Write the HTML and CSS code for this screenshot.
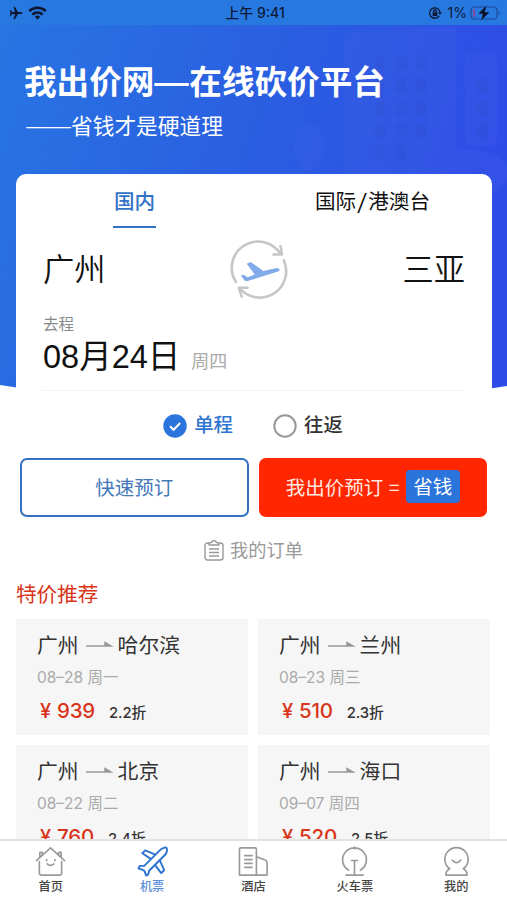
FILE: index.html
```html
<!DOCTYPE html>
<html lang="zh-CN">
<head>
<meta charset="utf-8">
<title>我出价网</title>
<link rel="stylesheet" href="styles.css">
</head>
<body>
<div class="app">
  <header class="status">
    <div class="status-left">
      <svg width="14" height="14" viewBox="0 0 14 14"><path d="M13.300 7c0-.7-.8-1.100-1.800-1.100H9L5.800.8H4.500L6 5.900H3.200L1.900 4.300H.8L1.500 7 .8 9.700h1.100l1.300-1.600H6L4.500 13.200h1.300L9 8.100h2.500c1 0 1.800-.4 1.800-1.100z" fill="#0d1830"/></svg>
      <svg width="19" height="14" viewBox="0 0 19 14" fill="none" stroke="#0d1830" stroke-width="2.500"><path d="M1.200 5.200a12 12 0 0 1 16.600 0M4.400 8.500a7.400 7.400 0 0 1 10.200 0"/><path d="M9.500 13.400 6.800 10.700a4 4 0 0 1 5.400 0z" fill="#0d1830" stroke="none"/></svg>
    </div>
    <div class="status-time">上午 9:41</div>
    <div class="status-right">
      <svg width="14" height="14" viewBox="0 0 14 14" fill="none" stroke="#0d1830" stroke-width="1.300"><path d="M11.200 9.800A5.200 5.200 0 1 1 12 7"/><path d="M10.200 6.300h3.600L12 8.700z" fill="#0d1830" stroke="none"/><rect x="4.600" y="6.300" width="4.800" height="3.600" rx=".6" fill="#0d1830" stroke="none"/><path d="M5.600 6.500V5.400a1.400 1.400 0 0 1 2.800 0v1.100"/></svg>
      <span>1%</span>
      <svg class="battery" width="31" height="16" viewBox="0 0 31 16"><rect x="1" y="2" width="26" height="12" rx="3.500" fill="none" stroke="#1d4b9b" stroke-width="1.200"/><rect x="3" y="4" width="2" height="8" rx="1" fill="#8a4a9a"/><path d="M28.700 6v4c1.300-.5 1.300-3.500 0-4z" fill="#1d4b9b"/><path d="M16.300.8 8.300 8.700h4.600l-1.600 6.500 8-8h-4.600z" fill="#0b1226"/></svg>
    </div>
  </header>

  <section class="hero">
    <svg class="hero-bg" viewBox="0 0 507 364" preserveAspectRatio="none">
      <defs>
        <linearGradient id="sky" x1="0" y1="0" x2="1" y2=".25"><stop offset="0" stop-color="#2875e3"/><stop offset=".5" stop-color="#2a60e1"/><stop offset="1" stop-color="#2e4ce6"/></linearGradient>
      </defs>
      <path d="M0 0H507V361Q253 400 0 360Z" fill="url(#sky)"/>
      <g fill="#4a68e6" opacity=".18">
        <path d="M344 8 456 2V150H344z"/><rect x="465" y="28" width="32" height="93" rx="6"/><ellipse cx="309" cy="122" rx="15" ry="24"/><ellipse cx="466" cy="148" rx="44" ry="24"/>
      </g>
      <g fill="#2a4cc6" opacity=".22">
        <rect x="375" y="32" width="10" height="13" rx="4"/><rect x="396" y="32" width="11" height="13" rx="4"/><rect x="416" y="32" width="11" height="13" rx="4"/>
        <rect x="375" y="53" width="10" height="15" rx="3"/><rect x="396" y="53" width="11" height="15" rx="3"/><rect x="416" y="53" width="11" height="15" rx="3"/>
        <rect x="375" y="76" width="10" height="15" rx="3"/><rect x="396" y="76" width="11" height="15" rx="3"/><rect x="416" y="76" width="11" height="15" rx="3"/>
        <rect x="375" y="98" width="10" height="15" rx="4"/><rect x="396" y="98" width="11" height="15" rx="4"/><rect x="416" y="98" width="11" height="15" rx="4"/>
        <rect x="375" y="120" width="10" height="15" rx="4"/><rect x="396" y="120" width="11" height="15" rx="4"/>
        <rect x="477" y="53" width="10" height="15" rx="3"/><rect x="477" y="76" width="10" height="15" rx="3"/><rect x="477" y="98" width="10" height="15" rx="3"/>
      </g>
    </svg>
    <h1 class="hero-title">我出价网<span class="title-dash">—</span>在线砍价平台</h1>
    <p class="hero-sub"><span class="dash">——</span>省钱才是硬道理</p>
    <div class="search-card">
      <div class="tabs">
        <div class="tab active">国内</div>
        <div class="tab">国际<span class="slash">/</span>港澳台</div>
      </div>
      <div class="cities">
        <span>广州</span>
        <svg width="56" height="57" viewBox="0 0 56 57" fill="none" stroke="#c6c6c6" stroke-width="2.600" stroke-linecap="round" stroke-linejoin="round"><path d="M3.800 38.800A26.300 26.300 0 0 1 48.500 10.900M41.500 11.500 50 11.500 48.500 3"/><path d="M51.800 17.400A26.300 26.300 0 0 1 7.300 44.700M15.500 44.700 6.800 44.700 9.700 53.500"/><path d="M8.700 32.300 12 32 15.500 34.300 22.700 31.500 14.700 20.700 18.700 19 31.300 28 43.500 25.300C47.500 24.400 49.500 27.200 45.300 28.700L16.500 37.800C14 38.600 13 37.800 12.200 37Z" fill="#82aae9" stroke="none"/></svg>
        <span>三亚</span>
      </div>
      <div class="label">去程</div>
      <div class="date"><span class="date-day">08月24日</span><span class="date-week">周四</span></div>
    </div>
  </section>

  <main class="body">
    <div class="trip">
      <div class="radio active"><svg width="24" height="24" viewBox="0 0 24 24"><circle cx="12" cy="12" r="11.700" fill="#2a74dc"/><path d="m7 12.300 3.600 3.500 6.600-6.800" fill="none" stroke="#fff" stroke-width="2"/></svg><span>单程</span></div>
      <div class="radio"><svg width="24" height="24" viewBox="0 0 24 24"><circle cx="12" cy="12" r="10.700" fill="none" stroke="#999" stroke-width="2"/></svg><span>往返</span></div>
    </div>
    <div class="actions">
      <div class="btn outline">快速预订</div>
      <div class="btn solid"><span>我出价预订 <span class="equals">=</span></span><b class="save">省钱</b></div>
    </div>
    <div class="orders">
      <svg width="20" height="21" viewBox="0 0 20 21" fill="none" stroke="#999" stroke-width="1.400" stroke-linejoin="round"><path d="M5 3H3.500A2.500 2.500 0 0 0 1 5.500v12A2.500 2.500 0 0 0 3.500 20h13a2.500 2.500 0 0 0 2.500-2.500v-12A2.500 2.500 0 0 0 16.500 3H15M5 5V3l2.500-.5Q8 .8 10 .8t2.500 1.700L15 3v2zM5 9h10M5 12.500h10M5 16h10"/></svg>
      <span>我的订单</span>
    </div>
    <h2 class="section-title">特价推荐</h2>
    <div class="deals">
      <article class="deal"><div class="route">广州<svg width="27" height="8" viewBox="0 0 27 8"><path d="M1 6H26L20 2.500V6" fill="#999" stroke="#999" stroke-width="1.500"/></svg>哈尔滨</div><div class="when">08–28 周一</div><div class="price"><i>¥</i><b>939</b><em>2.2折</em></div></article>
      <article class="deal"><div class="route">广州<svg width="27" height="8" viewBox="0 0 27 8"><path d="M1 6H26L20 2.500V6" fill="#999" stroke="#999" stroke-width="1.500"/></svg>兰州</div><div class="when">08–23 周三</div><div class="price"><i>¥</i><b>510</b><em>2.3折</em></div></article>
      <article class="deal"><div class="route">广州<svg width="27" height="8" viewBox="0 0 27 8"><path d="M1 6H26L20 2.500V6" fill="#999" stroke="#999" stroke-width="1.500"/></svg>北京</div><div class="when">08–22 周二</div><div class="price"><i>¥</i><b>760</b><em>2.4折</em></div></article>
      <article class="deal"><div class="route">广州<svg width="27" height="8" viewBox="0 0 27 8"><path d="M1 6H26L20 2.500V6" fill="#999" stroke="#999" stroke-width="1.500"/></svg>海口</div><div class="when">09–07 周四</div><div class="price"><i>¥</i><b>520</b><em>2.5折</em></div></article>
    </div>
  </main>

  <nav class="tabbar">
    <div class="item"><svg viewBox="0 0 32 32"><path d="M1.500 15 16 2 30.500 15M5 11.500V6.500H7.500V9M27 11.500V6.500H24.500V9M4.500 16V27.500a2.500 2.500 0 0 0 2.500 2.500H25a2.500 2.500 0 0 0 2.500-2.500V16M12 14v1.200M20.500 14v1.200M12.500 18.500q3.500 3 7 0"/></svg><span>首页</span></div>
    <div class="item active"><svg viewBox="0 0 32 32"><path d="M24 4C26 2 29.500 1 30.500 2S31 7 29 9L12.500 25.500 11.500 29.500 9.500 30.500 7.500 25.500 1.500 23 3 20.500 7.500 20.500ZM19 9 8.500 4.500 5.500 7.500 14.500 13.500M23.500 14.500 28 25 25 28 18.500 19.500"/></svg><span>机票</span></div>
    <div class="item"><svg viewBox="0 0 32 32"><path d="M3 2H17.500a1.500 1.500 0 0 1 1.500 1.500V30H1.500V3.500A1.500 1.500 0 0 1 3 2ZM19 11 28 14.500a3 3 0 0 1 2 2.500V30H19M7 10H14.500M7 14H14.500M7 18H14.500M7 22H14.500"/></svg><span>酒店</span></div>
    <div class="item"><svg viewBox="0 0 32 32"><path d="M10 25A12.300 12.300 0 1 1 22 25M16 1V3M16 15V30M13 15H19M7 30H25"/></svg><span>火车票</span></div>
    <div class="item"><svg viewBox="0 0 32 32"><path d="M9 23.500A12 12 0 1 1 23 23.500Q27 25.500 27 30H5Q5 25.500 9 23.500M11.500 14.500Q16 20 20.500 14.500"/></svg><span>我的</span></div>
  </nav>
</div>
</body>
</html>
```
FILE: styles.css
```css
* { box-sizing: border-box; margin: 0; padding: 0; }
body { background: #fff; font-family: Inter, "Noto Sans CJK SC", sans-serif; color: #111; }
svg { display: block; flex: none; overflow: visible; }
i, em { font-style: normal; }
.app { width: 507px; height: 900px; display: flex; flex-direction: column; overflow: hidden; }

.status { height: 25px; flex: none; background: #2779e0; display: grid; grid-template-columns: 1fr auto 1fr; align-items: center; padding: 1px 6px 0 9px; color: #0d1a35; font-size: 14px; line-height: 20px; }
.status-left { display: flex; align-items: center; gap: 5px; }
.status-time { font-weight: 500; }
.status-right { display: flex; align-items: center; justify-content: flex-end; gap: 6px; }
.battery { margin-left: -3px; }

.hero { position: relative; height: 364px; flex: none; padding: 0 15px 0 16px; }
.hero-bg { position: absolute; inset: 0; width: 507px; height: 364px; z-index: -1; overflow: hidden; }
.hero-title { display: flex; padding: 31px 0 0 8px; font: 700 32.600px/48px "Noto Sans CJK SC", sans-serif; color: #fff; white-space: nowrap; }
.title-dash { width: 35px; display: flex; justify-content: center; transform: scaleX(1.3); }
.hero-sub { display: flex; align-items: center; padding: 5px 0 0 9px; font: 400 21.700px/32px "Noto Sans CJK SC", sans-serif; color: #fff; }
.dash { width: 46px; white-space: nowrap; transform: scaleX(1.3); transform-origin: left; }
.search-card { margin-top: 33px; height: 216px; background: #fff; border-radius: 10px 10px 0 0; padding: 0 27px; }
.tabs { display: flex; justify-content: space-between; padding: 10px 35px 0 70px; }
.tab { font: 400 20.600px/33px "Noto Sans CJK SC", sans-serif; padding-bottom: 9px; }
.slash { display: inline-block; width: 12px; text-align: center; transform: scaleX(1.25); }
.tab.active { color: #3472c8; font-weight: 500; border-bottom: 2px solid #3472c8; padding-inline: 1px; }
.cities { display: flex; align-items: center; justify-content: space-between; height: 62px; margin-top: 12px; font: 350 31.300px/46px "Noto Sans CJK SC", sans-serif; }
.cities svg { margin-left: 11px; }
.cities span { position: relative; top: -3px; }
.label { margin-top: 10px; font: 400 15.500px/22px "Noto Sans CJK SC", sans-serif; color: #888; }
.date { display: flex; align-items: baseline; gap: 11px; line-height: 42px; margin-top: 2px; }
.date-day { font: 400 32.500px/42px "Liberation Sans", "Noto Sans CJK SC", sans-serif; }
.date-week { font: 400 18px/42px "Noto Sans CJK SC", sans-serif; color: #aaa; }

.body { flex: 1; min-height: 0; overflow: hidden; padding: 0 16px; }
.trip { display: flex; justify-content: center; gap: 40px; margin: 0 27px 0 26px; border-top: 2px solid #f3f3f3; padding-top: 19px; height: 69px; }
.radio { display: flex; gap: 7px; height: 32px; align-items: center; font: 500 19.400px/32px "Noto Sans CJK SC", sans-serif; color: #333; }
.radio.active { color: #2f74d0; }
.radio span { position: relative; top: -2px; }
.actions { display: grid; grid-template-columns: 1fr 1fr; gap: 10px; margin: 0 4px; }
.btn { height: 59px; border-radius: 7px; display: flex; align-items: center; justify-content: center; font: 400 19.500px/30px "Noto Sans CJK SC", sans-serif; padding-bottom: 2px; }
.outline { border: 2px solid #3472c0; color: #4478bb; }
.solid { background: #ff2600; color: #ffe9e0; gap: 5px; }
.equals { display: inline-block; width: 13px; text-align: center; }
.save { font-weight: 400; color: #fff; background: #2a74dc; border-radius: 4px; width: 54px; height: 33px; line-height: 32px; text-align: center; }
.orders { display: flex; align-items: center; justify-content: center; gap: 6px; margin-top: 17px; font: 400 18.200px/32px "Noto Sans CJK SC", sans-serif; color: #999; }
.orders span { position: relative; top: -1px; }
.section-title { margin-top: 11px; font: 400 20.600px/32px "Noto Sans CJK SC", sans-serif; color: #d8351a; }
.deals { display: grid; grid-template-columns: 232px 232px; gap: 10px; margin-top: 10px; }
.deal { height: 116px; background: #f6f6f6; padding: 9px 21px 0; }
.route { display: flex; align-items: center; gap: 6px; font: 400 20.800px/32px "Noto Sans CJK SC", sans-serif; color: #333; }
.when { padding-top: 2px; font: 400 15.500px/32px Inter, "Noto Sans CJK SC", sans-serif; color: #aaa; }
.price { display: flex; align-items: baseline; padding-left: 3px; line-height: 34px; color: #d8351a; }
.price i { font-size: 20px; font-weight: 500; width: 17px; }
.price b { font-size: 20.500px; font-weight: 500; letter-spacing: -.2px; }
.price em { margin-left: 14px; font-size: 14.800px; font-weight: 500; color: #333; letter-spacing: -.1px; }

.tabbar { height: 61px; flex: none; border-top: 2px solid #e2e2e2; background: #fff; display: grid; grid-template-columns: repeat(5, 1fr); }
.item { display: flex; flex-direction: column; align-items: center; padding-top: 5px; font: 500 12.200px/18px "Noto Sans CJK SC", sans-serif; color: #444; }
.item svg { width: 31px; height: 31px; fill: none; stroke: #999; stroke-width: 1.700; stroke-linecap: round; stroke-linejoin: round; }
.item.active { color: #5a8fd8; }
.item.active svg { stroke: #2f74d0; stroke-width: 2; }
```
